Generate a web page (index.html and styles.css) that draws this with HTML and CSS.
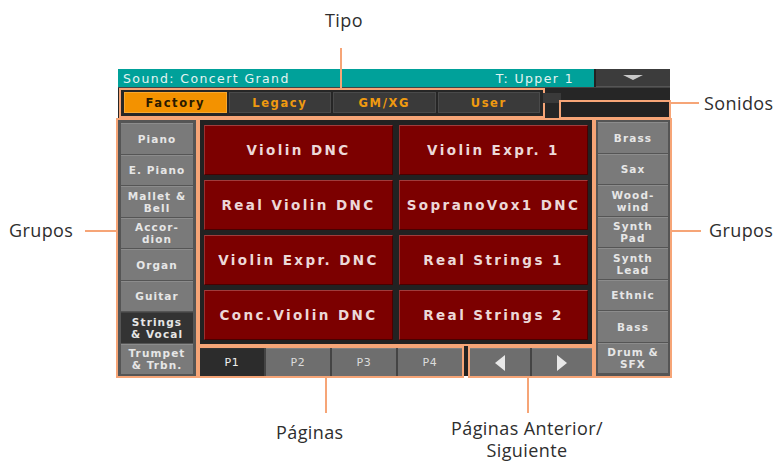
FILE: index.html
```html
<!DOCTYPE html>
<html lang="es">
<head>
  <meta charset="UTF-8" />
  <title>Sound Select</title>
  <link rel="stylesheet" href="styles.css">
</head>
<body>
  <div class="figure">
    <div class="screen">
      <div class="titlebar">
        <div class="title">
          <span>Sound: Concert Grand</span>
          <span class="track">T: Upper 1</span>
        </div>
        <div class="menu"><span class="tri"></span></div>
      </div>

      <div class="tabrow">
        <div class="tabs hl">
          <div class="tab on">Factory</div>
          <div class="tab">Legacy</div>
          <div class="tab">GM/XG</div>
          <div class="tab">User</div>
        </div>
        <div class="tabstub"></div>
        <div class="sounds hl"></div>
      </div>

      <div class="main">
        <div class="groups hl">
          <div class="grp">Piano</div>
          <div class="grp">E. Piano</div>
          <div class="grp two">Mallet &amp;<br>Bell</div>
          <div class="grp two">Accor-<br>dion</div>
          <div class="grp">Organ</div>
          <div class="grp">Guitar</div>
          <div class="grp two sel">Strings<br>&amp; Vocal</div>
          <div class="grp two">Trumpet<br>&amp; Trbn.</div>
        </div>

        <div class="center">
          <div class="grid hl">
            <div class="cell">Violin DNC</div>
            <div class="cell">Violin Expr. 1</div>
            <div class="cell">Real Violin DNC</div>
            <div class="cell">SopranoVox1 DNC</div>
            <div class="cell">Violin Expr. DNC</div>
            <div class="cell">Real Strings 1</div>
            <div class="cell">Conc.Violin DNC</div>
            <div class="cell">Real Strings 2</div>
          </div>
          <div class="pagebar">
            <div class="pages hl">
              <div class="pg on">P1</div>
              <div class="pg">P2</div>
              <div class="pg">P3</div>
              <div class="pg">P4</div>
            </div>
            <div class="arrows hl">
              <div class="pg"><span class="arr left"></span></div>
              <div class="pg"><span class="arr right"></span></div>
            </div>
          </div>
        </div>

        <div class="groups right hl">
          <div class="grp">Brass</div>
          <div class="grp">Sax</div>
          <div class="grp two">Wood-<br>wind</div>
          <div class="grp two">Synth<br>Pad</div>
          <div class="grp two">Synth<br>Lead</div>
          <div class="grp">Ethnic</div>
          <div class="grp">Bass</div>
          <div class="grp two">Drum &amp;<br>SFX</div>
        </div>
      </div>
    </div>

    <!-- callouts -->
    <div class="label l-tipo">Tipo</div>
    <div class="line v" style="left:340px; top:48px; height:40px"></div>

    <div class="label l-sonidos">Sonidos</div>
    <div class="line h" style="left:669px; top:102px; width:30px"></div>

    <div class="label l-grupos-l">Grupos</div>
    <div class="line h" style="left:85px; top:230px; width:31px"></div>

    <div class="label l-grupos-r">Grupos</div>
    <div class="line h" style="left:670px; top:230px; width:31px"></div>

    <div class="label l-pag">Páginas</div>
    <div class="line v" style="left:325px; top:377px; height:36px"></div>

    <div class="label l-ant">Páginas Anterior/<br>Siguiente</div>
    <div class="line v" style="left:527px; top:377px; height:36px"></div>
  </div>
</body>
</html>
```

FILE: styles.css
```css
body {
  margin: 0;
  background: #fff;
}
.figure {
  position: relative;
  width: 777px;
  height: 463px;
  overflow: hidden;
}

/* screen */
.screen {
  position: relative;
  margin: 69px 0 0 118px;
  width: 552px;
  height: 307px;
  background: #222;
  font-family: "DejaVu Sans", sans-serif;
  font-weight: bold;
  color: #e0e0e0;
}
.hl {
  outline: 2px solid #f6a577;
}
.titlebar {
  display: flex;
  height: 18px;
}
.title {
  flex: 1;
  display: flex;
  justify-content: space-between;
  align-items: center;
  padding: 0 20px 0 5px;
  background: #00a19a;
  color: #e4f4f2;
  font-weight: normal;
  font-size: 12.5px;
  letter-spacing: 1.4px;
}
.menu {
  width: 74px;
  margin-left: 2px;
  background: #3c3c3c;
  display: flex;
  justify-content: center;
  align-items: center;
  border-bottom: 1px solid #555;
}
.tri {
  width: 0;
  height: 0;
  border-left: 10px solid transparent;
  border-right: 10px solid transparent;
  border-top: 5px solid #c8c8c8;
}

.tabrow {
  display: flex;
  align-items: flex-start;
  height: 30px;
  background: #262626;
  border-top: 1px solid #444;
}
.tabs {
  display: flex;
  gap: 2px;
  margin: 2px 0 0 3px;
  padding: 2px 3px 3px;
  width: 416px;
}
.tab {
  flex: 1;
  height: 21px;
  background: #3a3a3a;
  border: 1px solid #4a4a4a;
  box-sizing: border-box;
  color: #f09a10;
  font-size: 11.5px;
  letter-spacing: 1.6px;
  display: flex;
  justify-content: center;
  align-items: center;
}
.tab.on {
  background: #f39200;
  border-color: #f8a830;
  color: #2a1a00;
}
.tabstub {
  width: 18px;
  height: 10px;
  margin-top: 5px;
  background: #3a3a3a;
}
.sounds {
  width: 108px;
  height: 15px;
  margin-top: 14px;
  background: #222;
}

.main {
  display: flex;
  gap: 4px;
  margin-top: 2px;
  height: 256px;
}
.groups {
  width: 72px;
  padding: 3px 3px 0 3px;
  display: flex;
  flex-direction: column;
  gap: 1px;
  background: #555;
}
.groups.right {
  width: 70px;
  padding: 2px 2px 0 2px;
}
.grp {
  height: 30.5px;
  background: #7a7a7a;
  border-top: 1px solid #8c8c8c;
  box-sizing: border-box;
  display: flex;
  justify-content: center;
  align-items: center;
  text-align: center;
  color: #e6e6e6;
  font-size: 10.5px;
  letter-spacing: 1.1px;
}
.grp.two {
  line-height: 12px;
}
.grp.sel {
  background: #333;
  border-top-color: #444;
}

.center {
  width: 392px;
  display: flex;
  flex-direction: column;
}
.grid {
  display: grid;
  grid-template-columns: 1fr 1fr;
  grid-auto-rows: 50px;
  gap: 5px 6px;
  padding: 5px 4px 4px 4px;
  height: 219px;
  background: #222;
}
.cell {
  background: #7c0000;
  border-top: 1px solid #a03c3c;
  border-left: 1px solid #9a3030;
  border-right: 1px solid #4a0000;
  border-bottom: 1px solid #4a0000;
  display: flex;
  justify-content: center;
  align-items: center;
  color: #ecd8d8;
  font-size: 13.5px;
  letter-spacing: 2.4px;
}
.pagebar {
  display: flex;
  gap: 6px;
  margin-top: 4px;
  height: 28px;
}
.pages, .arrows {
  display: flex;
  gap: 2px;
  background: #444;
}
.pages {
  width: 262px;
}
.arrows {
  flex: 1;
  margin-left: 2px;
}
.pg {
  flex: 1;
  background: #6e6e6e;
  border-top: 1px solid #808080;
  display: flex;
  justify-content: center;
  align-items: center;
  color: #dcdcdc;
  font-size: 11px;
  font-weight: normal;
  letter-spacing: 0.8px;
}
.pg.on {
  background: #2c2c2c;
  border-top-color: #333;
  color: #f0f0f0;
}
.arr {
  width: 0;
  height: 0;
  border-top: 8px solid transparent;
  border-bottom: 8px solid transparent;
}
.arr.left {
  border-right: 10px solid #e8e8e8;
}
.arr.right {
  border-left: 10px solid #e8e8e8;
}

/* callouts */
.label {
  position: absolute;
  font-family: "Open Sans", sans-serif;
  font-size: 18px;
  letter-spacing: 0.4px;
  color: #2e2e2e;
  line-height: 24px;
}
.line {
  position: absolute;
  background: #f6a577;
}
.line.v {
  width: 1.5px;
}
.line.h {
  height: 1.5px;
}
.l-tipo { left: 325px; top: 8px; }
.l-sonidos { left: 704px; top: 91px; }
.l-grupos-l { left: 9px; top: 218px; }
.l-grupos-r { left: 709px; top: 218px; }
.l-pag { left: 276px; top: 420px; }
.l-ant { left: 437px; top: 417px; text-align: center; width: 180px; line-height: 22px; }
```
